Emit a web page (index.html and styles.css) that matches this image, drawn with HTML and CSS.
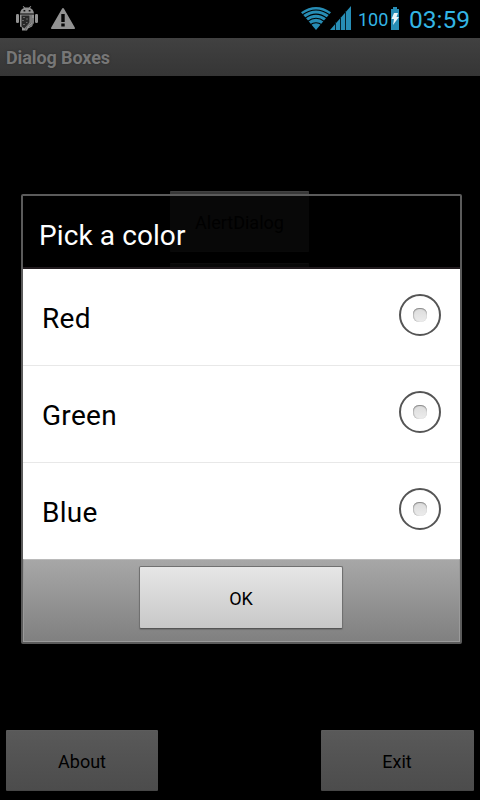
FILE: index.html
```html
<!DOCTYPE html>
<html lang="en">
<head>
<meta charset="utf-8">
<title>Dialog Boxes</title>
<link rel="stylesheet" href="styles.css">
</head>
<body>
<div class="screen">
  <header class="status">
    <svg class="droid" width="22" height="26" viewBox="0 0 22 26">
      <g fill="#929292">
        <path d="M4 7.500C4.300 4.500 6 2.500 8 2L6.700.5l.7-.5L9 1.600h4L14.600 0l.7.5L14 2c2 .5 3.700 2.500 4 5.500z"/>
        <rect x="0" y="8" width="3" height="9" rx="1.200"/>
        <rect x="19" y="8" width="3" height="9" rx="1.200"/>
        <path d="M4 8.500h14v8l-2 4-4 2-1 2H6v-3l-2-1z"/>
      </g>
      <path fill="#111" d="M7.500 4h1.800v1.500H7.500zM12.700 4h1.800v1.500h-1.800z"/>
      <path fill="#292929" d="M5.500 9.500h8v7l-3 3.500-2 2.500-3-2z"/>
      <path fill="#656565" d="M7 11h2v1H7zM10 12.500h2v1h-2zM6 14h2v1H6zM10 16h1.500v1H10zM7 18h2v1H7z"/>
      <path stroke="#656565" fill="none" d="M15 9v8l-4 3-1.500 4M17 12v6l-4 3"/>
    </svg>
    <svg class="warn" width="24" height="21" viewBox="0 0 24 21">
      <path fill="#929292" d="M12 0q.6 0 1 .8L23.800 19.500Q24.200 21 23 21H1Q-.2 21 .2 19.500L11 .8Q11.400 0 12 0z"/>
      <path fill="#050505" d="M10.300 6h3.400v8h-3.400zM10.300 15.500h3.400v3h-3.400z"/>
    </svg>
    <svg class="wifi" width="30" height="23" viewBox="0 0 30 23">
      <path fill="#278db5" d="M0 5.200Q15-5.200 30 5.200L15 23z"/>
      <g fill="none" stroke="#000" stroke-width="1.100">
        <path d="M1.500 7.800Q15-1.800 28.500 7.800M4 11.200q11-8.200 22 0M6.500 14.500q8.500-6.500 17 0M9 18q6-4.600 12 0"/>
      </g>
    </svg>
    <svg class="signal" width="21" height="24" viewBox="0 0 21 24">
      <path fill="#278db5" d="M0 24 21 0v24z"/>
      <path stroke="#06202b" stroke-width="1" d="M5.500 16v8M10.500 11v13M15.500 5v19"/>
    </svg>
    <span class="percent">100</span>
    <svg class="battery" width="8" height="23" viewBox="0 0 8 23">
      <path fill="#278db5" d="M2 0h4v2h2v21H0V2h2z"/>
      <path fill="#eaf5f9" d="M3 6h4L5.500 10H8L2 18l1-6H.5z"/>
    </svg>
    <span class="clock">03:59</span>
  </header>
  <div class="titlebar">Dialog Boxes</div>
  <main class="content">
    <div class="dim-button alert"><span>AlertDialog</span></div>
    <div class="dim-button second"></div>
  </main>
  <footer class="actions">
    <div class="dim-button about"><span>About</span></div>
    <div class="dim-button exit"><span>Exit</span></div>
  </footer>
  <section class="dialog">
    <h1 class="dialog-title">Pick a color</h1>
    <ul class="choices">
      <li><span>Red</span><i class="radio"></i></li>
      <li><span>Green</span><i class="radio"></i></li>
      <li><span>Blue</span><i class="radio"></i></li>
    </ul>
    <div class="panel"><button class="ok">OK</button></div>
  </section>
</div>
</body>
</html>
```
FILE: styles.css
```css
* { box-sizing: border-box; }
body { margin: 0; background: #000; font-family: Roboto, sans-serif; }
.screen {
  position: relative;
  width: 480px;
  height: 800px;
  overflow: hidden;
  display: flex;
  flex-direction: column;
  background: #000;
}
.status {
  height: 38px;
  display: flex;
  align-items: flex-start;
  color: #33b5e5;
  line-height: 38px;
}
.status svg { flex: none; }
.droid { margin: 6px 0 0 16px; }
.warn { margin: 8px 0 0 13px; }
.wifi { margin: 7px 0 0 226px; }
.signal { margin: 6px 0 0 -1px; }
.percent { width: 33px; margin-left: 7px; font-size: 18px; padding-top: 1px; }
.battery { margin-top: 7px; }
.clock { margin-left: 10px; font-size: 24.500px; padding-top: 1px; }
.titlebar {
  height: 38px;
  padding-left: 6px;
  background: linear-gradient(#414141, #353535);
  color: #777;
  font-size: 18px;
  font-weight: 700;
  letter-spacing: -.1px;
  line-height: 40px;
  text-shadow: 0 0 2px #282828;
}
.content {
  flex: 1;
  display: flex;
  flex-direction: column;
  align-items: center;
  padding-top: 115px;
  gap: 11px;
}
.dim-button {
  height: 61px;
  display: flex;
  align-items: center;
  justify-content: center;
  border-radius: 1px;
  background: linear-gradient(#595959, #4c4c4c);
  border-top: 1px solid #5c5c5c;
  border-bottom: 1px solid #464646;
  color: #000;
  font-size: 18px;
  padding-top: 1px;
}
.exit { padding-right: 1px; }
.alert, .second { width: 139px; margin-right: 1px; }
.alert { background: #383838; border-color: #414141; }
.second { background: #383838; }
.actions {
  height: 70px;
  display: flex;
  justify-content: space-between;
  padding: 0 6px;
}
.about { width: 152px; }
.exit { width: 153px; }
.dialog {
  position: absolute;
  left: 21px;
  top: 194px;
  width: 441px;
  height: 450px;
  border: 2px solid #5b5b5b;
  border-radius: 2px;
  background: rgba(0, 0, 0, .86);
  background-clip: padding-box;
  display: flex;
  flex-direction: column;
}
.dialog-title {
  height: 73px;
  margin: 0;
  padding: 5px 0 0 16px;
  border-bottom: 2px solid #211b1e;
  color: #fff;
  font-size: 28px;
  font-weight: 400;
  letter-spacing: .1px;
  line-height: 70px;
}
.choices {
  height: 290px;
  margin: 0;
  padding: 0;
  list-style: none;
  background: #fff;
  color: #000;
  font-size: 28px;
  letter-spacing: .3px;
}
.choices li {
  height: 97px;
  display: flex;
  align-items: center;
  justify-content: space-between;
  padding: 2px 19px 0;
  border-bottom: 1px solid #e8e8e8;
}
.choices li:last-child { border-color: transparent; }
.radio {
  width: 42px;
  height: 42px;
  margin-top: -6px;
  border: 2px solid #555;
  border-radius: 50%;
  display: flex;
  align-items: center;
  justify-content: center;
}
.radio::after {
  content: "";
  width: 14px;
  height: 14px;
  border-radius: 6px;
  background: linear-gradient(#dcdcdc, #ececec);
  box-shadow: inset 0 1px 1px #888, inset 1px 0 1px #c0c0c0;
}
.panel {
  height: 83px;
  padding-top: 6px;
  display: flex;
  justify-content: center;
  align-items: flex-start;
  background: linear-gradient(#a7a7a7, #808080);
  border: 1px solid #9a9a9a;
  border-top-color: #bababa;
}
.ok {
  width: 204px;
  height: 63px;
  margin-left: -1px;
  padding: 2px 0 0;
  border: 1px solid #707070;
  border-bottom-color: #555;
  border-radius: 2px;
  background: linear-gradient(#e6e6e6, #c8c8c8);
  color: #000;
  font: 18px Roboto, sans-serif;
  box-shadow: 0 1px 1px #707070;
}
```
